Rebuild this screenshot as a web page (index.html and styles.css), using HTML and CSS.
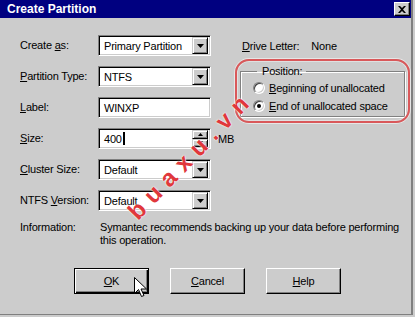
FILE: index.html
```html
<!DOCTYPE html>
<html lang="en">
<head>
    <meta charset="UTF-8">
    <title>Create Partition</title>
    <link rel="stylesheet" href="styles.css">
</head>
<body>
    <div class="dialog">
        <div class="titlebar">
            <span class="title">Create Partition</span>
            <span class="close">
                <svg width="8" height="7" viewBox="0 0 8 7"><path d="M0 0h2l2 2 2-2h2L5 3.5 8 7H6L4 5 2 7H0l3-3.5z" fill="#000"/></svg>
            </span>
        </div>

        <div class="content">
            <div class="form">
                <span class="label">Create <u>a</u>s:</span>
                <div class="combo">
                    <span>Primary Partition</span>
                    <span class="drop"><svg width="7" height="4" viewBox="0 0 7 4"><path d="M0 0h7L3.5 4z" fill="#000"/></svg></span>
                </div>
                <div class="drive">
                    <span><u>D</u>rive Letter:</span>
                    <span class="drive-value">None</span>
                </div>

                <span class="label"><u>P</u>artition Type:</span>
                <div class="combo">
                    <span>NTFS</span>
                    <span class="drop"><svg width="7" height="4" viewBox="0 0 7 4"><path d="M0 0h7L3.5 4z" fill="#000"/></svg></span>
                </div>
                <div class="group-wrap">
                    <fieldset class="group">
                        <legend>Position:</legend>
                        <div class="radio-row"><span class="radio"></span><span><u>B</u>eginning of unallocated</span></div>
                        <div class="radio-row"><span class="radio checked"></span><span><u>E</u>nd of unallocated space</span></div>
                    </fieldset>
                    <div class="annotation"></div>
                </div>

                <span class="label"><u>L</u>abel:</span>
                <div class="field">WINXP</div>

                <span class="label"><u>S</u>ize:</span>
                <div class="field spin-field">
                    <span>400<i class="caret"></i></span>
                    <span class="spin">
                        <span class="spin-btn"><svg width="5" height="3" viewBox="0 0 5 3"><path d="M2.5 0L5 3H0z" fill="#000"/></svg></span>
                        <span class="spin-btn"><svg width="5" height="3" viewBox="0 0 5 3"><path d="M0 0h5L2.5 3z" fill="#000"/></svg></span>
                    </span>
                </div>
                <span class="unit">MB</span>

                <span class="label"><u>C</u>luster Size:</span>
                <div class="combo">
                    <span>Default</span>
                    <span class="drop"><svg width="7" height="4" viewBox="0 0 7 4"><path d="M0 0h7L3.5 4z" fill="#000"/></svg></span>
                </div>

                <span class="label">NTFS <u>V</u>ersion:</span>
                <div class="combo">
                    <span>Default</span>
                    <span class="drop"><svg width="7" height="4" viewBox="0 0 7 4"><path d="M0 0h7L3.5 4z" fill="#000"/></svg></span>
                </div>

                <span class="label info-label">Information:</span>
                <p class="info">Symantec recommends backing up your data before performing<br>this operation.</p>
            </div>

            <div class="buttons">
                <button class="btn default" type="button">
                    <u>O</u>K
                    <svg class="cursor" width="13" height="20" viewBox="0 0 13 20"><path d="M0.5 0.5v16l4-4 3 7 2.5-1-3-6.5h5.5z" fill="#fff" stroke="#000"/></svg>
                </button>
                <button class="btn" type="button"><u>C</u>ancel</button>
                <button class="btn" type="button"><u>H</u>elp</button>
            </div>
        </div>

        <div class="watermark">buaxu.vn</div>
    </div>
</body>
</html>
```

FILE: styles.css
```css
* {
    margin: 0;
    padding: 0;
    box-sizing: border-box;
}

body {
    background-color: #cccccc;
    font-family: 'Liberation Sans', Arial, sans-serif;
    font-size: 11px;
    letter-spacing: -0.2px;
    color: #000;
}

.dialog {
    position: relative;
    width: 413px;
    height: 315px;
    border-right: 2px solid #7f7f7f;
    border-bottom: 1px solid #7f7f7f;
    overflow: hidden;
}

/* title bar */
.titlebar {
    height: 18px;
    background-color: #000080;
    display: flex;
    align-items: center;
    justify-content: space-between;
    padding: 0 1px 0 7px;
}

.title {
    color: #fff;
    font-weight: 700;
    font-size: 12px;
    letter-spacing: 0;
}

.close {
    width: 16px;
    height: 14px;
    background-color: #cccccc;
    border: 1px solid;
    border-color: #fff #000 #000 #fff;
    box-shadow: inset -1px -1px #808080;
    display: flex;
    align-items: center;
    justify-content: center;
}

/* form grid */
.content {
    padding-top: 17px;
}

.form {
    display: grid;
    grid-template-columns: 78px 113px 1fr;
    grid-template-rows: repeat(6, 21px) auto;
    row-gap: 10px;
    padding: 0 8px 0 20px;
}

.label {
    grid-column: 1;
    align-self: center;
    line-height: 13px;
}

.combo,
.field {
    grid-column: 2;
    height: 21px;
    background-color: #fff;
    border: 1px solid;
    border-color: #808080 #fff #fff #808080;
    box-shadow: inset 1px 1px #000, inset -1px -1px #cccccc;
    display: flex;
    align-items: center;
    justify-content: space-between;
    padding: 2px 2px 2px 5px;
}

.drop {
    width: 16px;
    height: 17px;
    background-color: #cccccc;
    border: 1px solid;
    border-color: #cccccc #000 #000 #cccccc;
    box-shadow: inset 1px 1px #fff, inset -1px -1px #808080;
    display: flex;
    align-items: center;
    justify-content: center;
}

.caret {
    display: inline-block;
    width: 2px;
    height: 13px;
    background-color: #000;
    vertical-align: -2px;
    margin-left: 1px;
}

.spin {
    display: flex;
    flex-direction: column;
    width: 16px;
    height: 17px;
}

.spin-btn {
    flex: 1;
    background-color: #cccccc;
    border: 1px solid;
    border-color: #cccccc #000 #000 #cccccc;
    box-shadow: inset 1px 1px #fff, inset -1px -1px #808080;
    display: flex;
    align-items: center;
    justify-content: center;
}

.unit {
    grid-column: 3;
    align-self: center;
    margin-left: 7px;
}

.drive {
    grid-column: 3;
    align-self: center;
    margin-left: 31px;
    display: flex;
}

.drive-value {
    margin-left: 12px;
}

/* position group */
.group-wrap {
    position: relative;
    grid-column: 3;
    grid-row: 2 / 4;
    margin: -1px 0 0 29px;
    width: 165px;
    align-self: start;
}

.group {
    height: 52px;
    border: 1px solid #808080;
    box-shadow: 1px 1px #fff, inset 1px 1px #fff;
    padding: 1px 0 0 12px;
}

.group legend {
    padding: 0 4px 0 5px;
    margin-left: 4px;
    line-height: 13px;
}

.radio-row {
    display: flex;
    align-items: center;
    gap: 4px;
    height: 18px;
}

.radio {
    width: 12px;
    height: 12px;
    border-radius: 50%;
    background-color: #fff;
    border: 1px solid;
    border-color: #808080 #fff #fff #808080;
    box-shadow: inset 1px 1px #404040, inset -1px -1px #cccccc;
    display: flex;
    align-items: center;
    justify-content: center;
}

.radio.checked::after {
    content: '';
    width: 4px;
    height: 4px;
    border-radius: 50%;
    background-color: #000;
}

.annotation {
    position: absolute;
    top: -6px;
    left: -5px;
    right: -5px;
    bottom: -6px;
    border: 2px solid #d9585a;
    border-radius: 14px;
    box-shadow: 0 0 0 1px rgba(255, 255, 255, 0.5), inset 0 0 0 1px rgba(255, 255, 255, 0.4);
    pointer-events: none;
}

/* information */
.info-label {
    align-self: start;
}

.info {
    grid-column: 2 / 4;
    margin-left: 2px;
    line-height: 13px;
    white-space: nowrap;
}

/* buttons */
.buttons {
    display: flex;
    gap: 21px;
    padding-left: 74px;
    margin-top: 21px;
}

.btn {
    position: relative;
    width: 75px;
    height: 26px;
    background-color: #cccccc;
    border: 1px solid;
    border-color: #fff #000 #000 #fff;
    box-shadow: inset -1px -1px #808080;
    font: inherit;
    letter-spacing: inherit;
    color: #000;
}

.btn.default {
    border-color: #000;
    box-shadow: inset 1px 1px #fff, inset -1px -1px #000, inset -2px -2px #808080;
}

.cursor {
    position: absolute;
    left: 59px;
    top: 8px;
}

/* site watermark over the screenshot */
.watermark {
    position: absolute;
    left: 141px;
    top: 200px;
    font-size: 24px;
    font-weight: 700;
    letter-spacing: 8px;
    line-height: 24px;
    color: #e0383c;
    text-shadow: 0 0 1px #fff, 0 0 2px #fff;
    transform: rotate(-46deg);
    transform-origin: left bottom;
    pointer-events: none;
}
```
